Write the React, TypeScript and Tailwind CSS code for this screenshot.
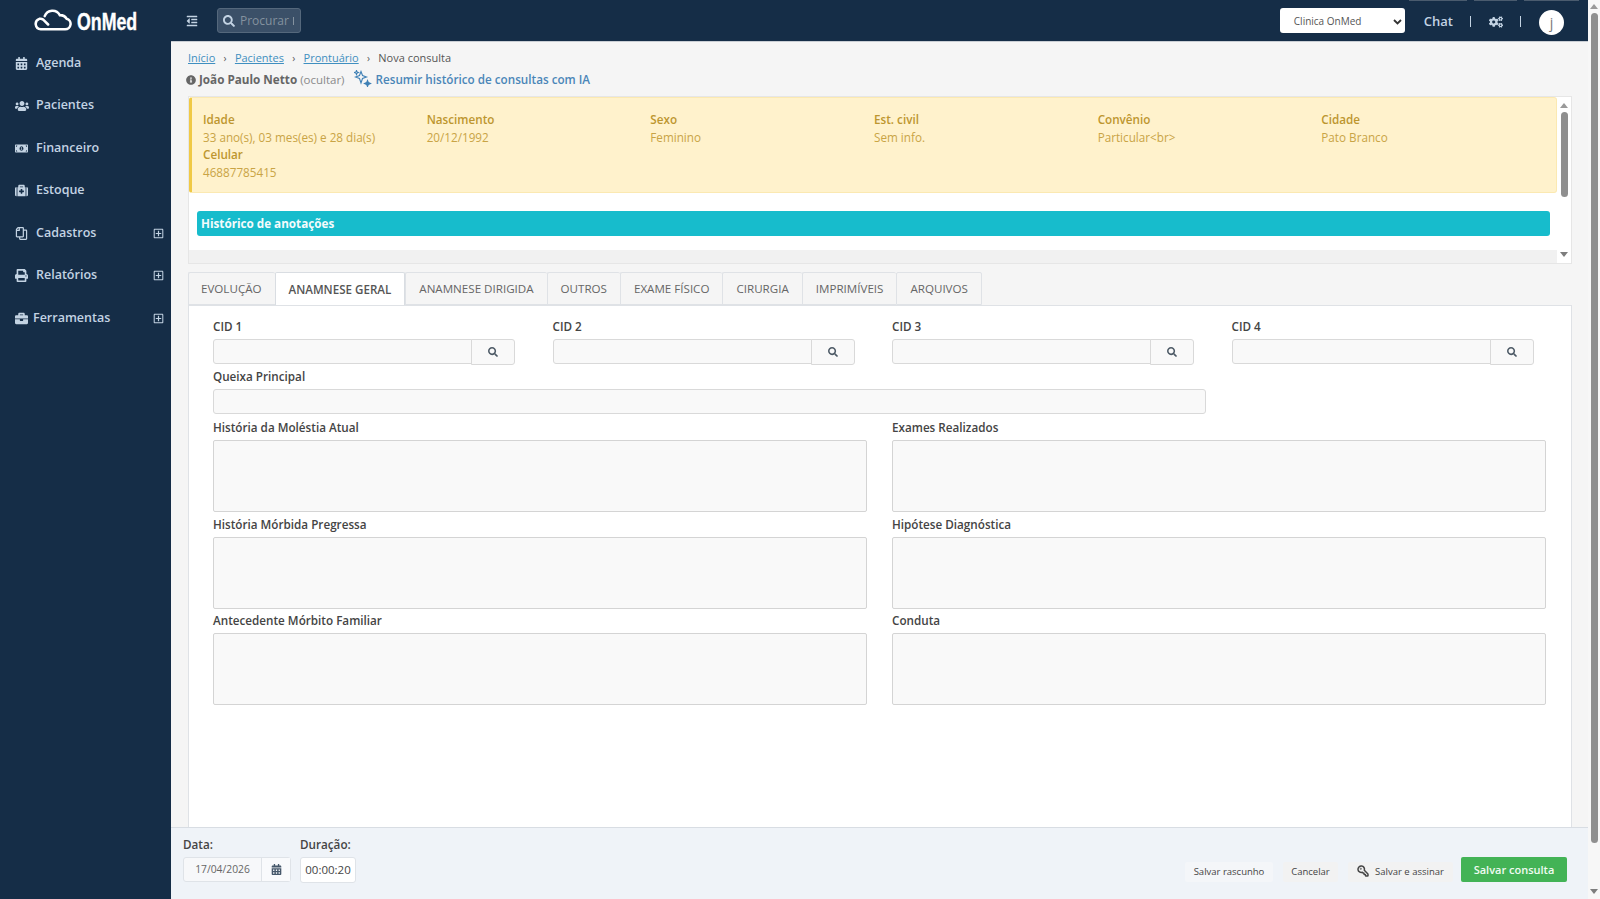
import React from 'react'
import {
  FaBriefcase,
  FaCalendarAlt,
  FaCogs,
  FaInfoCircle,
  FaMedkit,
  FaMoneyBillAlt,
  FaPrint,
  FaRegCopy,
  FaRegPlusSquare,
  FaSearch,
  FaUsers,
  FaOutdent,
} from 'react-icons/fa'
import { LuKeyRound } from 'react-icons/lu'

const menu = [
  { label: 'Agenda', icon: FaCalendarAlt, iconClass: 'h-[13px] w-[13px] shrink-0' },
  { label: 'Pacientes', icon: FaUsers, iconClass: 'h-[14px] w-[14px] shrink-0', textClass: 'ml-[7px]' },
  { label: 'Financeiro', icon: FaMoneyBillAlt, iconClass: 'h-[13px] w-[13px] shrink-0' },
  { label: 'Estoque', icon: FaMedkit, iconClass: 'h-[13px] w-[13px] shrink-0' },
  { label: 'Cadastros', icon: FaRegCopy, iconClass: 'h-[13px] w-[13px] shrink-0 -scale-x-100', more: true },
  { label: 'Relatórios', icon: FaPrint, iconClass: 'h-[13px] w-[13px] shrink-0', more: true },
  { label: 'Ferramentas', icon: FaBriefcase, iconClass: 'h-[13px] w-[13px] shrink-0', textClass: 'ml-[5px]', more: true },
]

const patient = [
  { title: 'Idade', value: '33 ano(s), 03 mes(es) e 28 dia(s)' },
  { title: 'Nascimento', value: '20/12/1992' },
  { title: 'Sexo', value: 'Feminino' },
  { title: 'Est. civil', value: 'Sem info.' },
  { title: 'Convênio', value: 'Particular<br>' },
  { title: 'Cidade', value: 'Pato Branco' },
  { title: 'Celular', value: '46887785415' },
]

const tabs = ['EVOLUÇÃO', 'ANAMNESE GERAL', 'ANAMNESE DIRIGIDA', 'OUTROS', 'EXAME FÍSICO', 'CIRURGIA', 'IMPRIMÍVEIS', 'ARQUIVOS']

const areas = [
  ['História da Moléstia Atual', 'Exames Realizados'],
  ['História Mórbida Pregressa', 'Hipótese Diagnóstica'],
  ['Antecedente Mórbito Familiar', 'Conduta'],
]

const Sidebar = () => (
  <aside className="w-[171px] shrink-0 bg-[#152d47] text-[#c3d3e3]">
    <div className="flex h-[42px] items-center pb-[2px] pl-[34px] text-white">
      <svg width="38" height="22" viewBox="0 0 39 22" fill="none" stroke="currentColor" strokeWidth="2.600" className="shrink-0">
        <path d="M9 20.500H7a5.500 5.500 0 0 1-1.500-10.700c1.500-.4 2.500-.2 4 .8l5 5M10 20.500h22a5.500 5.500 0 0 0 1.500-10.800A8 8 0 0 0 26.500 6 8.500 8.500 0 0 0 11 7" strokeLinecap="round" />
      </svg>
      <span className="ml-[5px] mt-[4px] w-[60px] origin-left scale-x-[0.74] whitespace-nowrap font-['Liberation_Sans',sans-serif] text-[24px] font-bold leading-none [-webkit-text-stroke:0.4px_white]">OnMed</span>
    </div>
    <nav>
      {menu.map((item) => (
        <div key={item.label} className="relative flex h-[42.500px] items-center pl-[15px] text-[12.500px] font-semibold">
          <item.icon className={item.iconClass} />
          <span className={item.textClass ?? 'ml-[8px]'}>{item.label}</span>
          {item.more && <FaRegPlusSquare className="absolute right-[7px] h-[11px] w-[11px]" />}
        </div>
      ))}
    </nav>
  </aside>
)

const Topbar = () => (
  <header className="relative flex h-[42px] shrink-0 items-center border-b border-[#c9ced4] bg-[#152d47] pl-[15px] text-[#c3d3e3]">
    <div className="absolute right-[9px] top-0 flex gap-[7px]">
      <span className="h-px w-[58px] bg-[#4a5b6e]" />
      <span className="h-px w-[43px] bg-[#4a5b6e]" />
      <span className="h-px w-[55px] bg-[#4a5b6e]" />
    </div>
    <FaOutdent className="h-[12px] w-[12px]" />
    <div className="ml-[19px] flex h-[25px] w-[84px] items-center rounded-[3px] border border-[#55687c] bg-[#3b5068] px-[5px] text-[12px] text-[#84929f]">
      <FaSearch className="mr-[5px] h-[12px] w-[12px] text-[#c3d3e3]" />
      <span>Procurar</span>
      <span className="ml-[4px] h-[8px] w-px bg-[#84929f]" />
    </div>
    <div className="ml-auto flex items-center pr-[24px]">
      <div className="flex h-[25px] w-[125px] items-center justify-between rounded-[3px] bg-white pl-[14px] pr-[3px] pt-[2px] text-[10px] text-[#555]">
        <span>Clinica OnMed</span>
        <svg width="9" height="6" viewBox="0 0 9 6" fill="none" stroke="#333" strokeWidth="1.800">
          <path d="M1 1l3.500 3.500L8 1" />
        </svg>
      </div>
      <span className="ml-[19px] mt-[3px] text-[13px] font-semibold">Chat</span>
      <span className="ml-[17px] mt-[1px] h-[11px] w-px bg-[#c3d3e3]" />
      <FaCogs className="ml-[18px] mt-[3px] h-[14px] w-[14px]" />
      <span className="ml-[17px] mt-[1px] h-[11px] w-px bg-[#c3d3e3]" />
      <span className="ml-[18px] mt-[3px] flex h-[25px] w-[25px] items-center justify-center rounded-full bg-white text-[14px] text-[#777]">j</span>
    </div>
  </header>
)

const PatientBox = () => (
  <section className="ml-[17px] mr-[16px] mt-[8px] flex h-[168px] border border-[#e6e6e6] bg-white">
    <div className="min-w-0 flex-1">
      <div className="grid h-[96px] grid-cols-6 content-start rounded-[3px] border border-l-[3px] border-[#fbe9b2] border-l-[#f0c945] bg-[#fff2cc] pl-[11px] pr-[11px] pt-[13px] text-[11.700px] leading-[17.500px] text-[#c9a445]">
        {patient.map((p) => (
          <div key={p.title} className="pr-[4px]">
            <div className="font-semibold text-[#bd962f]">{p.title}</div>
            <div>{p.value}</div>
          </div>
        ))}
      </div>
      <div className="ml-[8px] mr-[7px] mt-[18px] flex h-[25px] items-center rounded-[3px] bg-[#17bccc] pl-[4px] text-[11.700px] font-bold text-[#f4fbfc]">
        Histórico de anotações
      </div>
      <div className="mt-[14px] h-[13px] bg-[#f1f1f1]" />
    </div>
    <div className="flex w-[14px] shrink-0 flex-col items-center pt-[6px]">
      <span className="border-x-[4px] border-b-[5px] border-x-transparent border-b-[#9a9a9a]" />
      <span className="mt-[4px] h-[85px] w-[7px] rounded-full bg-[#8f8f8f]" />
      <span className="mt-auto mb-[6px] border-x-[4px] border-t-[5px] border-x-transparent border-t-[#7d7d7d]" />
    </div>
  </section>
)

const CidField = ({ label }: { label: string }) => (
  <div className="w-[302px]">
    <label className="block text-[11.700px] font-semibold leading-[17px] text-[#444]">{label}</label>
    <div className="mt-[4px] flex h-[25px]">
      <div className="flex-1 rounded-l-[3px] border border-[#d9d9d9] bg-[#f9f9f9]" />
      <div className="-ml-px flex h-[26px] w-[44px] items-center justify-center rounded-r-[3px] border border-[#d9d9d9] bg-[#f9f9f9]">
        <FaSearch className="h-[10px] w-[10px] text-[#4d5a66]" />
      </div>
    </div>
  </div>
)

const TextArea = ({ label }: { label: string }) => (
  <div>
    <label className="block text-[11.700px] font-semibold leading-[17px] text-[#444]">{label}</label>
    <div className="mt-[4px] h-[72px] rounded-[2px] border border-[#d4d4d4] bg-[#f9f9f9]" />
  </div>
)

const Tabs = () => (
  <div className="ml-[17px] mr-[16px] mt-[8px] flex min-h-0 flex-1 flex-col">
    <div className="flex h-[33px] shrink-0">
      {tabs.map((t, i) => (
        <div
          key={t}
          className={
            i === 1
              ? '-mb-px flex h-[34px] items-center rounded-t-[2px] border border-b-0 border-[#d9dde2] bg-white px-[13px] text-[11.600px] font-semibold text-[#555]'
              : 'flex items-center rounded-t-[2px] border border-r-0 border-[#dfe2e6] bg-[#f5f5f5] px-[13px] text-[11.600px] text-[#666] first:pl-[12px] last:border-r'
          }
        >
          {t}
        </div>
      ))}
    </div>
    <div className="flex-1 border border-b-0 border-[#dfe2e6] bg-white px-[24px] pt-[12px]">
      <div className="grid grid-cols-[302px_302px_302px_302px] gap-x-[37.500px]">
        <CidField label="CID 1" />
        <CidField label="CID 2" />
        <CidField label="CID 3" />
        <CidField label="CID 4" />
      </div>
      <div className="mt-[4px] w-[993px]">
        <label className="block text-[11.700px] font-semibold leading-[17px] text-[#444]">Queixa Principal</label>
        <div className="mt-[4px] h-[25px] rounded-[3px] border border-[#d9d9d9] bg-[#f9f9f9]" />
      </div>
      <div className="mt-[5px] grid grid-cols-[654px_654px] gap-x-[25px] gap-y-[3.500px]">
        {areas.flat().map((a) => (
          <TextArea key={a} label={a} />
        ))}
      </div>
    </div>
  </div>
)

const Footer = () => (
  <footer className="flex h-[72px] shrink-0 border-t border-[#d8dde3] bg-[#eff3f8] pl-[12px] pr-[21px] text-[#444]">
    <div className="pt-[8px]">
      <div className="text-[11.700px] font-semibold leading-[17px]">Data:</div>
      <div className="mt-[4px] flex h-[25px] w-[108px] rounded-[3px] border border-[#dfe3e8] bg-[#f7f8fa] text-[10.300px] text-[#666]">
        <span className="flex w-[78px] items-center justify-center border-r border-[#dfe3e8] pt-[1px]">17/04/2026</span>
        <span className="flex flex-1 items-center justify-center bg-[#f9fafc]">
          <FaCalendarAlt className="h-[11px] w-[11px] text-[#46586b]" />
        </span>
      </div>
    </div>
    <div className="ml-[9px] pt-[8px]">
      <div className="text-[11.700px] font-semibold leading-[17px]">Duração:</div>
      <div className="mt-[4px] flex h-[26px] w-[56px] items-center justify-center rounded-[3px] border border-[#dfe3e8] bg-white text-[11.500px] text-[#444]">00:00:20</div>
    </div>
    <div className="ml-auto flex items-start gap-[10px] pt-[29px]">
      <button className="mt-[5px] h-[20px] w-[88px] rounded-[2px] bg-[#f4f6f9] pt-[1px] text-[9.500px] font-medium text-[#444]">Salvar rascunho</button>
      <button className="mt-[5px] h-[20px] w-[55px] rounded-[2px] bg-[#f2f2f2] pt-[1px] text-[9.500px] font-medium text-[#444]">Cancelar</button>
      <button className="-mr-[2px] mt-[5px] flex h-[20px] w-[105px] items-center justify-center rounded-[2px] bg-[#f2f2f2] pt-[1px] text-[9.500px] font-medium text-[#444]">
        <LuKeyRound strokeWidth={3} className="mr-[6px] -mt-[3px] h-[12px] w-[12px] -scale-x-100" />
        Salvar e assinar
      </button>
      <button className="h-[25px] w-[106px] rounded-[2px] bg-[#43b356] pt-[1px] text-[11px] font-semibold text-[#f1fbf2]">Salvar consulta</button>
    </div>
  </footer>
)

export default function App() {
  return (
    <div className="flex h-[899px] w-[1600px] overflow-hidden bg-white font-['Open_Sans',sans-serif]">
      <Sidebar />
      <main className="flex min-w-0 flex-1 flex-col bg-[#f5f5f5]">
        <Topbar />
        <div className="pl-[17px] pt-[9px] text-[11px] leading-[14px] text-[#555]">
          <a className="text-[#3f8fc0] underline">Início</a>
          <span className="mx-[8.300px] text-[10px]">›</span>
          <a className="text-[#3f8fc0] underline">Pacientes</a>
          <span className="mx-[8.300px] text-[10px]">›</span>
          <a className="text-[#3f8fc0] underline">Prontuário</a>
          <span className="mx-[8.300px] text-[10px]">›</span>
          <span>Nova consulta</span>
        </div>
        <div className="flex h-[23px] items-center pl-[15px] pt-[7px] text-[11.700px] text-[#666]">
          <FaInfoCircle className="mr-[3px] h-[10px] w-[10px]" />
          <span className="font-bold">João Paulo Netto</span>
          <span className="ml-[3px] text-[11.500px] text-[#8a8a8a]">(ocultar)</span>
          <svg width="18" height="17" viewBox="0 0 18 17" fill="none" stroke="#3f80b5" strokeWidth="1.100" className="ml-[9px] -mt-[4px]">
            <path d="M7 1.500l1.500 4 4 1.500-4 1.500L7 13 5.500 8.500l-4-1.500 4-1.500zM2.500.500l.6 1.400 1.400.6-1.400.6-.6 1.400-.6-1.400-1.400-.6 1.400-.6z" />
            <path d="M13.500 10.500l.9 2.100 2.100.9-2.100.9-.9 2.100-.9-2.100-2.100-.9 2.100-.9z" fill="#3f80b5" />
          </svg>
          <span className="ml-[4px] font-semibold text-[#4a86b8]">Resumir histórico de consultas com IA</span>
        </div>
        <PatientBox />
        <Tabs />
        <Footer />
      </main>
      <div className="flex w-[12px] shrink-0 flex-col items-center bg-[#f7f7f7] pt-[4px]">
        <span className="border-x-[4px] border-b-[5px] border-x-transparent border-b-[#9a9a9a]" />
        <span className="mt-[4px] h-[830px] w-[7px] rounded-full bg-[#8f8f8f]" />
        <span className="mt-auto mb-[5px] border-x-[4px] border-t-[5px] border-x-transparent border-t-[#7d7d7d]" />
      </div>
    </div>
  )
}
